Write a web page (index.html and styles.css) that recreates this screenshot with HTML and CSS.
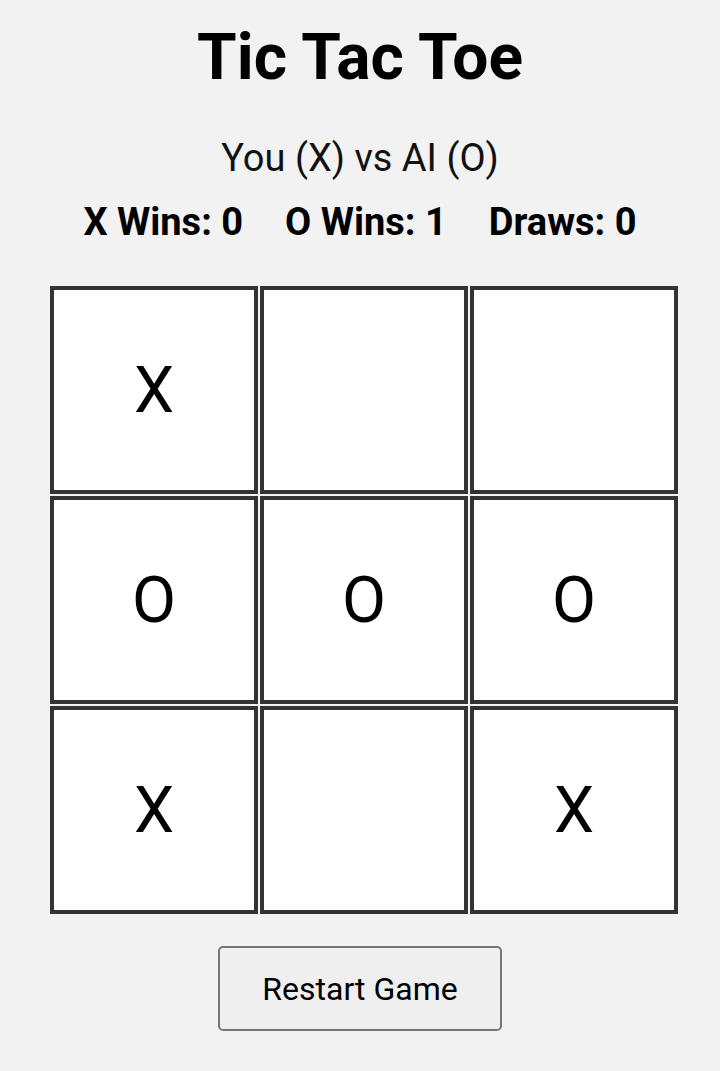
FILE: index.html
```html
<!DOCTYPE html>
<html lang="en">
<head>
    <meta charset="UTF-8">
    <meta name="viewport" content="width=device-width, initial-scale=1.0">
    <title>Tic Tac Toe</title>
    <link rel="stylesheet" href="styles.css">
</head>
<body>
    <div class="container">
        <h1>Tic Tac Toe</h1>
        <p class="mode">You (X) vs AI (O)</p>

        <div class="scores">
            <span>X Wins: 0</span>
            <span>O Wins: 1</span>
            <span>Draws: 0</span>
        </div>

        <div class="board">
            <div class="cell">X</div>
            <div class="cell"></div>
            <div class="cell"></div>
            <div class="cell">O</div>
            <div class="cell">O</div>
            <div class="cell">O</div>
            <div class="cell">X</div>
            <div class="cell"></div>
            <div class="cell">X</div>
        </div>

        <button class="restart">Restart Game</button>
    </div>
</body>
</html>
```

FILE: styles.css
```css
body {
    font-family: Roboto, "Liberation Sans", Arial, sans-serif;
    margin: 0;
    padding: 0;
    background-color: #f2f2f2;
    color: #000;
}

.container {
    display: flex;
    flex-direction: column;
    align-items: center;
    padding-top: 20px;
}

h1 {
    font-size: 64px;
    line-height: 75px;
    font-weight: 700;
    margin: 0;
}

.mode {
    font-size: 38px;
    line-height: 44px;
    margin: 41px 0 0;
    color: #111;
}

.scores {
    display: flex;
    gap: 42px;
    font-size: 38px;
    line-height: 44px;
    font-weight: 700;
    margin-top: 20px;
}

.board {
    display: grid;
    grid-template-columns: repeat(3, 208px);
    grid-template-rows: repeat(3, 208px);
    gap: 2px;
    margin: 42px 0 0 8px;
}

.cell {
    box-sizing: border-box;
    border: 4px solid #333;
    background-color: #fff;
    display: flex;
    align-items: center;
    justify-content: center;
    font-size: 64px;
    color: #000;
}

.restart {
    margin-top: 32px;
    width: 284px;
    height: 85px;
    font-family: inherit;
    font-size: 32px;
    color: #000;
    background-color: #efefef;
    border: 2px solid #767676;
    border-radius: 5px;
    cursor: pointer;
}

.restart:hover {
    background-color: #e5e5e5;
}
```
